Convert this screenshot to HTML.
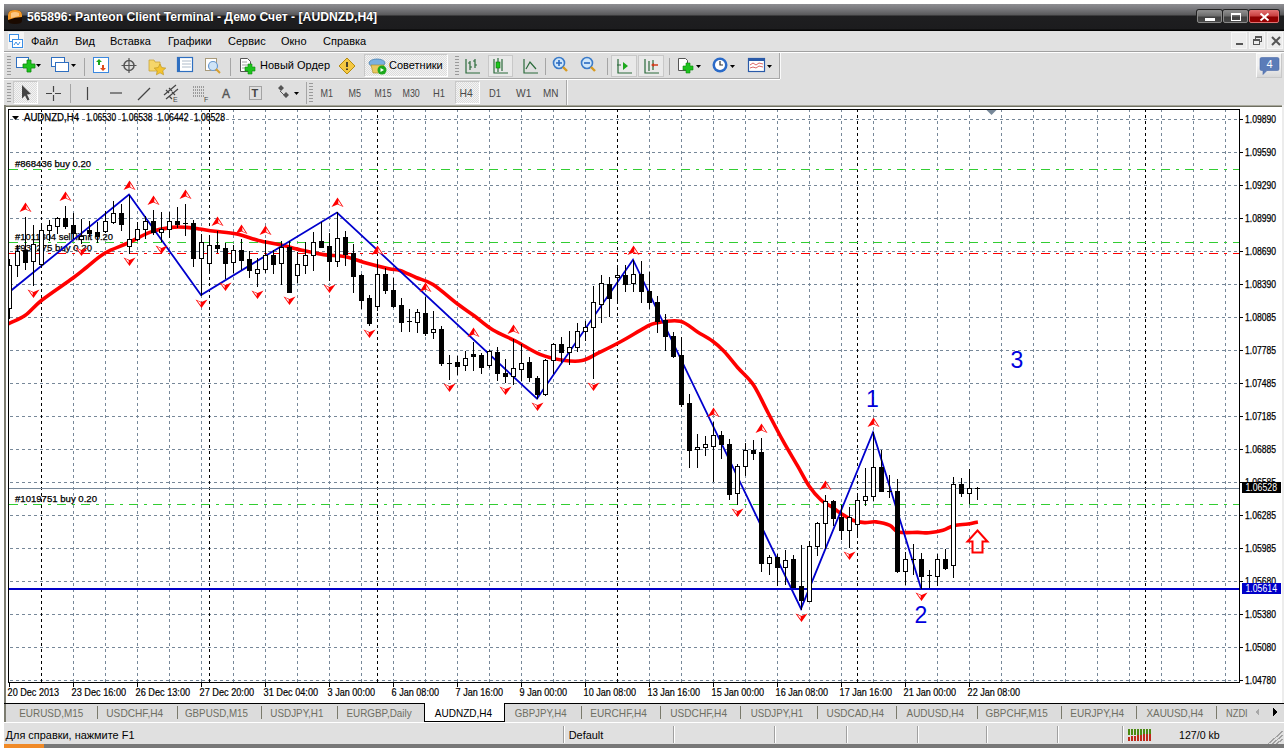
<!DOCTYPE html>
<html><head><meta charset="utf-8">
<style>
*{margin:0;padding:0;box-sizing:border-box}
html,body{width:1288px;height:748px;overflow:hidden;background:#fff;font-family:"Liberation Sans",sans-serif;font-size:11px;color:#000;position:relative}
.a{position:absolute}
#title{left:4px;top:4px;width:1280px;height:27px;background:linear-gradient(#8e8e92 0px,#78787c 5px,#58585a 11px,#1e1e20 12px,#1c1c1e 25px,#020202 26px)}
.tt{left:27px;top:6px;color:#fff;font-weight:bold;font-size:12.5px;white-space:nowrap}
.wb{top:6px;height:13px;border-radius:2px;border:1px solid #8a8a8a;box-shadow:0 0 0 1px #202020}
#menubar{left:4px;top:31px;width:1280px;height:20px;background:#e1e1e1}
.mi{top:4px;font-size:11px;white-space:nowrap}
.sepl{left:4px;width:1280px;height:1px}
#tb1{left:4px;top:52px;width:1280px;height:26px;background:#dfdfdf}
#tb2{left:4px;top:79px;width:1280px;height:26px;background:#dfdfdf}
.vs{width:1px;background:#a5a5a5}
.tf{color:#505050;font-size:11px;white-space:nowrap}
.grip{width:4px;background:repeating-linear-gradient(#9a9a9a 0 1px,transparent 1px 3px)}
.press{background:repeating-conic-gradient(#f4f4f4 0 25%,#dcdcdc 0 50%) 0 0/2px 2px;border:1px solid #c8c8c8;border-right-color:#fff;border-bottom-color:#fff}
#tabs{left:4px;top:705px;width:1280px;height:18px;background:#dddddd}
.tab{top:706px;color:#6e6e60;font-size:11px;white-space:nowrap}
.tsep{top:708px;width:1px;height:12px;background:#7a7a70}
#status{left:4px;top:724px;width:1280px;height:20px;background:#e1e1e1}
.ssep{top:725px;width:1px;height:18px;background:#b0b0b0}
</style></head><body>
<!-- title -->
<div id="title" class="a">
  <svg class="a" style="left:3px;top:5px" width="16" height="16"><path d="M1 6 Q1 1 8 1 Q15 1 15 6 L15 12 Q15 15 8 15 Q1 15 1 12Z" fill="#1a0a00"/><path d="M1 6 Q1 1 8 1 Q15 1 15 6 L15 8 Q8 8 1 11Z" fill="#f39a2a"/><path d="M4 4 Q8 2 12 4 L12 7 Q8 8 4 9Z" fill="#ffd9a8" opacity=".7"/></svg>
  <svg class="a" style="left:0;top:0" width="420" height="27"><text x="23" y="16.8" font-family="Liberation Sans" font-weight="bold" font-size="12.5" textLength="350" lengthAdjust="spacingAndGlyphs" fill="#fff" stroke="#000" stroke-width="0.3" paint-order="stroke">565896: Panteon Client Terminal - Демо Счет - [AUDNZD,H4]</text></svg>
  <div class="a wb" style="left:1193px;width:25px;background:linear-gradient(#8c8c8c,#6c6c6c 45%,#404040 55%,#484848)"><div class="a" style="left:7px;top:7px;width:10px;height:3px;background:#fff"></div></div>
  <div class="a wb" style="left:1219px;width:25px;background:linear-gradient(#8c8c8c,#6c6c6c 45%,#404040 55%,#484848)"><div class="a" style="left:7px;top:2px;width:10px;height:8px;border:1px solid #fff;border-top-width:2px"></div></div>
  <div class="a wb" style="left:1245px;width:30px;border-color:#e07070;background:linear-gradient(#e06a6a,#c84040 45%,#8c0000 55%,#960000)"><svg class="a" style="left:9px;top:1px" width="11" height="10"><path d="M1.5 1.5L9.5 8.5M9.5 1.5L1.5 8.5" stroke="#fff" stroke-width="2"/></svg></div>
</div>
<!-- menu -->
<div id="menubar" class="a">
  <div class="a" style="left:4px;top:1px;width:16px;height:17px;background:#f4f4f4"></div>
  <svg class="a" style="left:4px;top:2px" width="16" height="16"><rect x="1.5" y="1.5" width="9" height="7" fill="#fff" stroke="#3a8ee6"/><rect x="4.5" y="6.5" width="10" height="8" fill="#fff" stroke="#3a8ee6"/><path d="M6 12l2-3 2 3 2-3" stroke="#3a8ee6" fill="none"/></svg>
  <div class="a mi" style="left:27px">Файл</div>
  <div class="a mi" style="left:71px">Вид</div>
  <div class="a mi" style="left:106px">Вставка</div>
  <div class="a mi" style="left:164px">Графики</div>
  <div class="a mi" style="left:224px">Сервис</div>
  <div class="a mi" style="left:277px">Окно</div>
  <div class="a mi" style="left:319px">Справка</div>
  <div class="a" style="left:1227px;top:1px;width:16px;height:17px;background:#ececec;border:1px solid #f6f6f6"><div class="a" style="left:4px;top:10px;width:7px;height:2px;background:#555"></div></div>
  <div class="a" style="left:1245px;top:1px;width:16px;height:17px;background:#ececec;border:1px solid #f6f6f6"><div class="a" style="left:5px;top:3px;width:7px;height:6px;border:1px solid #555;border-top-width:2px"></div><div class="a" style="left:3px;top:6px;width:7px;height:6px;border:1px solid #555;border-top-width:2px;background:#ececec"></div></div>
  <div class="a" style="left:1263px;top:1px;width:16px;height:17px;background:#ececec;border:1px solid #f6f6f6"><svg class="a" style="left:3px;top:3px" width="10" height="10"><path d="M1 1L9 9M9 1L1 9" stroke="#555" stroke-width="2"/></svg></div>
</div>
<div class="a sepl" style="top:51px;background:#a0a0a0"></div>
<div class="a sepl" style="top:52px;background:#fff"></div>
<!-- toolbar 1 -->
<div id="tb1" class="a" style="top:53px;height:27px">
  <div class="a grip" style="left:3px;top:3px;height:19px"></div>
  <svg class="a" style="left:8px;top:3px" width="780" height="20">
    <!-- new chart -->
    <rect x="4.5" y="1.5" width="12" height="10" fill="#fff" stroke="#2f6fc0"/><path d="M11 8h4V4h4v4h4v4h-4v4h-4v-4h-4z" fill="#1ec31e" stroke="#0a8a0a" stroke-width=".8"/>
    <path d="M24 8h5l-2.5 3z" fill="#000"/>
    <!-- profiles -->
    <rect x="39.5" y="1.5" width="13" height="9" fill="#fff" stroke="#2f6fc0"/><rect x="43.5" y="6.5" width="13" height="9" fill="#fff" stroke="#2f6fc0"/><path d="M59 8h5l-2.5 3z" fill="#000"/>
    <rect x="72" y="2" width="1" height="19" fill="#a5a5a5"/>
    <!-- market watch -->
    <rect x="81.5" y="1.5" width="15" height="15" fill="#fff" stroke="#3a88e0"/><path d="M84 6l3-3 3 3h-2v3h-2V6z" fill="#1ca81c"/><path d="M88 12l3 3 3-3h-2V9h-2v3z" fill="#e04a1a"/>
    <!-- crosshair -->
    <circle cx="117" cy="9.5" r="5" fill="none" stroke="#555" stroke-width="1.5"/><path d="M117 2v15M109.5 9.5h15" stroke="#555" stroke-width="1.2"/>
    <!-- folder star -->
    <path d="M137 4h5l1 2h5v9h-11z" fill="#f5d66a" stroke="#c9a53a" stroke-width=".8"/><path d="M148 8l1.8 3.6 4 .5-3 2.7.8 4-3.6-2-3.6 2 .8-4-3-2.7 4-.5z" fill="#f4c430" stroke="#b8901a" stroke-width=".6"/>
    <!-- terminal -->
    <rect x="165.5" y="1.5" width="15" height="14" fill="#fff" stroke="#2f6fc0" stroke-width="1.2"/><rect x="166" y="2" width="2" height="13" fill="#2f6fc0"/><path d="M170 5h9M170 8h9M170 11h9" stroke="#9ab" stroke-width=".8"/>
    <!-- tester -->
    <rect x="193.5" y="2.5" width="11" height="12" fill="#fff" stroke="#a89a7a"/><circle cx="201" cy="10" r="4.5" fill="#cfe4f7" stroke="#6a9ad0" stroke-width="1.2"/><path d="M204 13l4 4" stroke="#d8a030" stroke-width="2"/>
    <rect x="218" y="2" width="1" height="19" fill="#a5a5a5"/>
    <!-- new order -->
    <path d="M228.5 2.5h7l3 3v10h-10z" fill="#fff" stroke="#555"/><path d="M230 6h5M230 9h6M230 12h4" stroke="#888" stroke-width=".8"/><path d="M233 11h3V8h4v3h3v4h-3v3h-4v-3h-3z" fill="#1ec31e" stroke="#0a8a0a" stroke-width=".6"/>
    <!-- warning -->
    <path d="M335 2l8 8-8 8-8-8z" fill="#f5c842" stroke="#b58c10"/><path d="M335 6v5M335 12.5v1.5" stroke="#222" stroke-width="1.6"/>
  </svg>
  <div class="a tf" style="left:256px;top:6px;color:#000">Новый Ордер</div>
  <div class="a press" style="left:360px;top:1px;width:84px;height:23px"></div>
  <svg class="a" style="left:364px;top:3px" width="20" height="20"><ellipse cx="9" cy="7" rx="8" ry="4" fill="#7ab0e0" stroke="#4a80b0" stroke-width=".8"/><path d="M3 9h13l-2 8H5z" fill="#e8c860" stroke="#a88a20" stroke-width=".6"/><circle cx="14" cy="14" r="4.5" fill="#1ca81c"/><path d="M12.5 12l3.5 2-3.5 2z" fill="#fff"/></svg>
  <div class="a tf" style="left:385px;top:6px;color:#000">Советники</div>
  <div class="a grip" style="left:451px;top:3px;height:19px"></div>
  <svg class="a" style="left:456px;top:2px" width="330" height="22">
    <!-- bar chart -->
    <path d="M6 4v14h14M10 6v9M8 8h2M10 12h2M15 4v9M13 6h2M15 10h2" stroke="#2a6a3a" fill="none" stroke-width="1.2"/>
    <rect x="28.5" y="0.5" width="24" height="21" fill="#e9e9e9" stroke="#c8c8c8"/>
    <path d="M34 4v14h14M38 3v14M42 4v12" stroke="#2a6a3a" fill="none" stroke-width="1.2"/><rect x="36" y="7" width="4" height="6" fill="#1cc81c" stroke="#0a6a0a" stroke-width=".6"/>
    <path d="M64 4v14h14M66 14l4-7 6 7" stroke="#2a6a3a" fill="none" stroke-width="1.2"/>
    <rect x="85" y="3" width="1" height="17" fill="#a5a5a5"/>
    <!-- zoom in/out -->
    <circle cx="99" cy="8" r="5.5" fill="#cfe6fa" stroke="#3a7ac8" stroke-width="1.6"/><path d="M96 8h6M99 5v6" stroke="#2a6ac0" stroke-width="1.6"/><path d="M103 12l4 4" stroke="#d89a20" stroke-width="2.4"/>
    <circle cx="127" cy="8" r="5.5" fill="#cfe6fa" stroke="#3a7ac8" stroke-width="1.6"/><path d="M124 8h6" stroke="#2a6ac0" stroke-width="1.6"/><path d="M131 12l4 4" stroke="#d89a20" stroke-width="2.4"/>
    <rect x="147" y="3" width="1" height="17" fill="#a5a5a5"/>
    <rect x="151.5" y="0.5" width="25" height="21" fill="#e9e9e9" stroke="#c8c8c8"/>
    <path d="M158 4v14h14M157 10h4" stroke="#2a6a3a" fill="none" stroke-width="1.2"/><path d="M163 7l5 4-5 4z" fill="#1ca81c"/>
    <rect x="178.5" y="0.5" width="25" height="21" fill="#e9e9e9" stroke="#c8c8c8"/>
    <path d="M185 4v14h14M189 6v10M193 5v10" stroke="#2a6a3a" fill="none" stroke-width="1.2"/><path d="M198 10h-4" stroke="#d03a1a" stroke-width="1.5"/><path d="M194 8l-3 2 3 2z" fill="#d03a1a"/>
    <rect x="209" y="3" width="1" height="17" fill="#a5a5a5"/>
    <!-- add indicator -->
    <path d="M218.5 3.5h7l2 2v10h-9z" fill="#fff" stroke="#555"/><path d="M223 11h3V8h4v3h3v4h-3v3h-4v-3h-3z" fill="#1ec31e" stroke="#0a8a0a" stroke-width=".6"/><path d="M236 10h5l-2.5 3z" fill="#000"/>
    <!-- clock -->
    <circle cx="260" cy="10" r="7.5" fill="#2a6ac8"/><circle cx="260" cy="10" r="5" fill="#fff"/><path d="M260 6v4h3" stroke="#333" stroke-width="1.2" fill="none"/><path d="M270 10h5l-2.5 3z" fill="#000"/>
    <!-- templates -->
    <rect x="288.5" y="3.5" width="16" height="13" fill="#fff" stroke="#2a5aa8" stroke-width="1.2"/><rect x="289" y="4" width="15" height="2" fill="#2a5aa8"/><path d="M290 10l3-2 3 2 3-2 4 1M290 13l3-1 3 1 3-2 4 1" stroke="#d04040" stroke-width=".8" fill="none"/><path d="M307 10h5l-2.5 3z" fill="#000"/>
  </svg>
  <div class="a" style="left:1252px;top:0px;width:26px;height:25px;background:linear-gradient(#f2f2f2 50%,#d8d8d8);border:1px solid #fafafa;border-right-color:#c8c8c8;border-bottom-color:#c8c8c8"></div>
  <svg class="a" style="left:1255px;top:3px" width="22" height="20"><path d="M2.5 1.5h16a1.5 1.5 0 0 1 1.5 1.5v10a1.5 1.5 0 0 1-1.5 1.5H8l-4 4v-4H2.5A1.5 1.5 0 0 1 1 13V3a1.5 1.5 0 0 1 1.5-1.5z" fill="#5b7cb8" stroke="#4a6aa8" stroke-width=".6"/><text x="10.5" y="12" font-family="'Liberation Sans', sans-serif" font-size="11" fill="#fff" text-anchor="middle">4</text></svg>
</div>
<div class="a" style="left:4px;top:78px;width:775px;height:1px;background:#a8a8a8"></div>
<div class="a" style="left:4px;top:79px;width:776px;height:1px;background:#fff"></div>
<div class="a" style="left:779px;top:53px;width:1px;height:26px;background:#a8a8a8"></div>
<div class="a" style="left:780px;top:53px;width:1px;height:26px;background:#fafafa"></div>
<!-- toolbar 2 -->
<div id="tb2" class="a" style="top:80px;height:25px">
  <div class="a grip" style="left:3px;top:3px;height:19px"></div>
  <div class="a press" style="left:9px;top:1px;width:25px;height:23px"></div>
  <svg class="a" style="left:6px;top:2px" width="300" height="22">
    <path d="M12 3l9 9-4 .5 2.5 5-2 1-2.5-5-3 3z" fill="#444"/>
    <path d="M43.5 4v6M43.5 13v6M36 11.5h6M45 11.5h6" stroke="#444" stroke-width="1.2"/>
    <rect x="60" y="2" width="1" height="19" fill="#a5a5a5"/>
    <path d="M77.5 5v13" stroke="#444" stroke-width="1.2"/>
    <path d="M100 11h12" stroke="#444" stroke-width="1.2"/>
    <path d="M128 18l12-12" stroke="#444" stroke-width="1.2"/>
    <path d="M154 13l12-10M156 17l12-10M156 8l3 3M159 6l3 3M162 10l3 3M159 14l3 3" stroke="#444" stroke-width="1.2"/><text x="163" y="20" font-family="Liberation Sans" font-size="7" fill="#444">E</text>
    <path d="M183 5h11M183 8h11M183 11h11M183 14h11" stroke="#555" stroke-width="1" stroke-dasharray="1 1"/><text x="194" y="20" font-family="Liberation Sans" font-size="7" fill="#444">F</text>
    <text x="212" y="15.5" font-family="Liberation Sans" font-size="12" fill="#555" stroke="#555" stroke-width="0.4">A</text>
    <rect x="239.5" y="4.5" width="12" height="13" fill="none" stroke="#666" stroke-dasharray="1 1"/><text x="241.5" y="15" font-family="Liberation Sans" font-weight="bold" font-size="11" fill="#444">T</text>
    <path d="M268 6l3-3 3 3-3 3zM273 13l3-3 3 3-3 3z" fill="#555"/><path d="M270 9l5 5" stroke="#555"/><path d="M284 10h5l-2.5 3z" fill="#000"/>
  </svg>
  <div class="a vs" style="left:302px;top:2px;height:22px"></div>
  <div class="a grip" style="left:305px;top:3px;height:19px"></div>
  <div class="a press" style="left:451px;top:1px;width:25px;height:23px"></div>
  <svg class="a" style="left:-4px;top:-80px" width="600" height="110"><text x="320.5" y="97" font-family="Liberation Sans" font-size="10.4" textLength="12.5" lengthAdjust="spacingAndGlyphs" fill="#4a4a4a">M1</text><text x="348.5" y="97" font-family="Liberation Sans" font-size="10.4" textLength="12.5" lengthAdjust="spacingAndGlyphs" fill="#4a4a4a">M5</text><text x="374.6" y="97" font-family="Liberation Sans" font-size="10.4" textLength="17" lengthAdjust="spacingAndGlyphs" fill="#4a4a4a">M15</text><text x="402.5" y="97" font-family="Liberation Sans" font-size="10.4" textLength="17.3" lengthAdjust="spacingAndGlyphs" fill="#4a4a4a">M30</text><text x="433" y="97" font-family="Liberation Sans" font-size="10.4" textLength="12" lengthAdjust="spacingAndGlyphs" fill="#4a4a4a">H1</text><text x="459.5" y="97" font-family="Liberation Sans" font-size="10.4" textLength="13.3" lengthAdjust="spacingAndGlyphs" fill="#4a4a4a">H4</text><text x="489" y="97" font-family="Liberation Sans" font-size="10.4" textLength="12" lengthAdjust="spacingAndGlyphs" fill="#4a4a4a">D1</text><text x="516" y="97" font-family="Liberation Sans" font-size="10.4" textLength="15.4" lengthAdjust="spacingAndGlyphs" fill="#4a4a4a">W1</text><text x="543" y="97" font-family="Liberation Sans" font-size="10.4" textLength="15.5" lengthAdjust="spacingAndGlyphs" fill="#4a4a4a">MN</text></svg>
  <div class="a" style="left:562px;top:0px;width:1px;height:25px;background:#a8a8a8"></div><div class="a" style="left:563px;top:0px;width:1px;height:25px;background:#fafafa"></div>
</div>
<!-- MDI frame -->
<div class="a" style="left:4px;top:105px;width:1280px;height:1px;background:#a8a89c"></div><div class="a" style="left:4px;top:106px;width:1280px;height:1px;background:#6e6e60"></div>
<div class="a" style="left:4px;top:105px;width:2px;height:598px;background:#7c7c70"></div>
<div class="a" style="left:1282px;top:105px;width:2px;height:598px;background:#ececec"></div>
<div class="a" style="left:4px;top:703px;width:1280px;height:1px;background:#000"></div>
<svg class="a" style="left:0;top:0" width="1288" height="748"><defs><clipPath id="cc"><rect x="9" y="110" width="1230" height="573"/></clipPath></defs><path d="M10 119.5H1239 M10 152.5H1239 M10 185.5H1239 M10 218.5H1239 M10 251.5H1239 M10 284.5H1239 M10 317.5H1239 M10 350.5H1239 M10 383.5H1239 M10 416.5H1239 M10 449.5H1239 M10 482.5H1239 M10 515.5H1239 M10 548.5H1239 M10 581.5H1239 M10 614.5H1239 M10 647.5H1239 M10 680.5H1239" stroke="#778899" stroke-width="1" stroke-dasharray="3 3" fill="none"/><path d="M41.5 110V683 M73.5 110V683 M105.5 110V683 M137.5 110V683 M169.5 110V683 M201.5 110V683 M233.5 110V683 M265.5 110V683 M297.5 110V683 M329.5 110V683 M361.5 110V683 M393.5 110V683 M425.5 110V683 M457.5 110V683 M489.5 110V683 M521.5 110V683 M553.5 110V683 M585.5 110V683 M617.5 110V683 M649.5 110V683 M681.5 110V683 M713.5 110V683 M745.5 110V683 M777.5 110V683 M809.5 110V683 M841.5 110V683 M873.5 110V683 M905.5 110V683 M937.5 110V683 M969.5 110V683 M1001.5 110V683 M1033.5 110V683 M1065.5 110V683 M1097.5 110V683 M1129.5 110V683 M1161.5 110V683 M1193.5 110V683 M1225.5 110V683" stroke="#778899" stroke-width="1" stroke-dasharray="3 3" stroke-dashoffset="1" fill="none"/><path d="M41.5 110V683 M209.5 110V683 M377.5 110V683 M617.5 110V683 M857.5 110V683 M1145.5 110V683" stroke="#000" stroke-width="1" stroke-dasharray="3 3" stroke-dashoffset="1" fill="none"/><path d="M9 169.5H1239" stroke="#32cd32" stroke-width="1" stroke-dasharray="9 6 3 6" fill="none"/><path d="M9 242.5H1239" stroke="#32cd32" stroke-width="1" stroke-dasharray="9 6 3 6" fill="none"/><path d="M9 253.5H1239" stroke="#ff0000" stroke-width="1" stroke-dasharray="9 6 3 6" fill="none"/><path d="M9 504.5H1239" stroke="#32cd32" stroke-width="1" stroke-dasharray="9 6 3 6" fill="none"/><text x="24" y="121" font-family='"Liberation Sans", sans-serif' font-size="10" textLength="55" lengthAdjust="spacingAndGlyphs" fill="#000" stroke="#000" stroke-width="0.25" >AUDNZD,H4</text><text x="86" y="121" font-family='"Liberation Sans", sans-serif' font-size="10" textLength="30" lengthAdjust="spacingAndGlyphs" fill="#000" stroke="#000" stroke-width="0.25" >1.06530</text><text x="121.5" y="121" font-family='"Liberation Sans", sans-serif' font-size="10" textLength="31" lengthAdjust="spacingAndGlyphs" fill="#000" stroke="#000" stroke-width="0.25" >1.06538</text><text x="157" y="121" font-family='"Liberation Sans", sans-serif' font-size="10" textLength="31.5" lengthAdjust="spacingAndGlyphs" fill="#000" stroke="#000" stroke-width="0.25" >1.06442</text><text x="193.7" y="121" font-family='"Liberation Sans", sans-serif' font-size="10" textLength="31.3" lengthAdjust="spacingAndGlyphs" fill="#000" stroke="#000" stroke-width="0.25" >1.06528</text><text x="15" y="167" font-family='"Liberation Sans", sans-serif' font-size="9.4" textLength="76" lengthAdjust="spacingAndGlyphs" fill="#000" stroke="#000" stroke-width="0.25" >#868436 buy 0.20</text><text x="15" y="240" font-family='"Liberation Sans", sans-serif' font-size="9.4" textLength="98" lengthAdjust="spacingAndGlyphs" fill="#000" stroke="#000" stroke-width="0.25" >#1011304 sell limit 0.20</text><text x="15" y="251" font-family='"Liberation Sans", sans-serif' font-size="9.4" textLength="77" lengthAdjust="spacingAndGlyphs" fill="#000" stroke="#000" stroke-width="0.25" >#930275 buy 0.20</text><text x="15" y="502" font-family='"Liberation Sans", sans-serif' font-size="9.4" textLength="82" lengthAdjust="spacingAndGlyphs" fill="#000" stroke="#000" stroke-width="0.25" >#1019751 buy 0.20</text><path d="M9 488.5H1239" stroke="#778899" stroke-width="1" fill="none"/><rect x="9" y="588" width="1230" height="2" fill="#0000c8"/><path clip-path="url(#cc)" d="M-8,333 C-5.3,331.5 2.5,326.9 8,324 C13.5,321.1 19.3,319.5 25,315.5 C30.7,311.5 34.0,306.2 42,300 C50.0,293.8 65.5,283.5 73,278 C80.5,272.5 81.7,271.2 87,267 C92.3,262.8 98.2,257.0 105,253 C111.8,249.0 120.5,246.4 128,243 C135.4,239.6 142.4,235.0 149.7,232.4 C156.9,229.8 165.3,228.2 171.5,227.4 C177.7,226.6 182.0,227.1 186.7,227.4 C191.4,227.7 195.0,228.3 199.7,229 C204.4,229.7 208.8,230.5 215,231.3 C221.2,232.1 229.5,232.5 236.7,234 C243.9,235.5 251.2,238.6 258.4,240.4 C265.6,242.2 272.7,243.2 280,244.8 C287.3,246.4 294.7,248.6 302,250.2 C309.3,251.8 316.5,253.5 323.7,254.6 C330.9,255.7 338.2,255.2 345.4,256.7 C352.6,258.1 359.8,261.3 367,263.3 C374.2,265.3 383.4,267.5 388.9,268.7 C394.4,269.9 395.5,269.0 400,270.5 C404.5,272.0 410.5,275.2 416,277.5 C421.5,279.8 426.0,280.0 433,284.5 C440.0,289.0 451.1,299.1 458,304.3 C464.9,309.6 468.7,311.7 474.5,316 C480.3,320.3 486.0,325.8 493,330 C500.0,334.2 508.7,337.4 516.5,341.5 C524.3,345.6 532.2,351.2 540,354.3 C547.8,357.4 556.0,359.1 563,360.2 C570.0,361.2 576.2,361.8 582,360.6 C587.8,359.4 591.5,356.4 598,353.2 C604.5,350.0 613.2,345.8 621,341.5 C628.8,337.2 639.2,330.7 645,327.6 C650.8,324.5 650.2,324.0 656,322.9 C661.8,321.8 673.1,319.7 680,321.2 C686.9,322.7 692.2,328.7 697.6,332 C703.0,335.3 708.0,337.8 712.4,341 C716.8,344.2 719.6,346.6 724,351.2 C728.4,355.8 733.9,363.2 738.8,368.8 C743.7,374.4 748.6,377.6 753.5,385 C758.4,392.4 763.3,403.7 768.2,413 C773.1,422.3 778.1,432.1 783,440.9 C787.9,449.7 793.2,458.3 797.6,465.9 C802.0,473.5 805.5,480.8 809.4,486.5 C813.3,492.2 817.4,496.6 821,500 C824.6,503.4 827.9,504.4 831.2,506.6 C834.5,508.9 837.3,511.2 841,513.5 C844.7,515.8 849.5,519.0 853.5,520.5 C857.5,522.0 861.0,522.4 864.7,522.6 C868.4,522.8 871.7,521.4 875.9,521.9 C880.1,522.4 886.2,523.7 889.9,525.4 C893.6,527.1 893.6,530.8 898.3,532 C902.9,533.2 912.7,532.3 917.8,532.4 C922.9,532.5 924.8,533.1 929,532.8 C933.2,532.4 938.8,531.5 943,530.3 C947.2,529.1 950.0,526.4 954.2,525.4 C958.4,524.4 964.0,524.6 968,524 C972.0,523.4 976.2,522.2 977.9,521.9" stroke="#ff0000" stroke-width="3.6" fill="none" stroke-linejoin="round"/><polyline clip-path="url(#cc)" points="0,299.6 129,194.6 201,295 337,212.5 537,398.7 633,259.7 801,608.7 873,432.4 921,588.2" stroke="#0000cd" stroke-width="1.8" fill="none" stroke-linejoin="miter"/><path d="M25.5 202.5 L19.5 212 L25.5 209.5 L31.5 212 Z" fill="#ff0000"/><path d="M26.3 205.3 L29.9 211.1 L26.3 208.9 Z" fill="#fff"/><path d="M65.5 191.5 L59.5 201 L65.5 198.5 L71.5 201 Z" fill="#ff0000"/><path d="M66.3 194.3 L69.9 200.1 L66.3 197.9 Z" fill="#fff"/><path d="M129.5 180.5 L123.5 190 L129.5 187.5 L135.5 190 Z" fill="#ff0000"/><path d="M130.3 183.3 L133.9 189.1 L130.3 186.9 Z" fill="#fff"/><path d="M153.5 195.5 L147.5 205 L153.5 202.5 L159.5 205 Z" fill="#ff0000"/><path d="M154.3 198.3 L157.9 204.1 L154.3 201.9 Z" fill="#fff"/><path d="M185.5 189.5 L179.5 199 L185.5 196.5 L191.5 199 Z" fill="#ff0000"/><path d="M186.3 192.3 L189.9 198.1 L186.3 195.9 Z" fill="#fff"/><path d="M217.5 216.5 L211.5 226 L217.5 223.5 L223.5 226 Z" fill="#ff0000"/><path d="M218.3 219.3 L221.9 225.1 L218.3 222.9 Z" fill="#fff"/><path d="M241.5 224.5 L235.5 234 L241.5 231.5 L247.5 234 Z" fill="#ff0000"/><path d="M242.3 227.3 L245.9 233.1 L242.3 230.9 Z" fill="#fff"/><path d="M265.5 225.5 L259.5 235 L265.5 232.5 L271.5 235 Z" fill="#ff0000"/><path d="M266.3 228.3 L269.9 234.1 L266.3 231.9 Z" fill="#fff"/><path d="M337.5 197.5 L331.5 207 L337.5 204.5 L343.5 207 Z" fill="#ff0000"/><path d="M338.3 200.3 L341.9 206.1 L338.3 203.9 Z" fill="#fff"/><path d="M377.5 245.5 L371.5 255 L377.5 252.5 L383.5 255 Z" fill="#ff0000"/><path d="M378.3 248.3 L381.9 254.1 L378.3 251.9 Z" fill="#fff"/><path d="M425.5 282.5 L419.5 292 L425.5 289.5 L431.5 292 Z" fill="#ff0000"/><path d="M426.3 285.3 L429.9 291.1 L426.3 288.9 Z" fill="#fff"/><path d="M473.5 327.5 L467.5 337 L473.5 334.5 L479.5 337 Z" fill="#ff0000"/><path d="M474.3 330.3 L477.9 336.1 L474.3 333.9 Z" fill="#fff"/><path d="M513.5 324.5 L507.5 334 L513.5 331.5 L519.5 334 Z" fill="#ff0000"/><path d="M514.3 327.3 L517.9 333.1 L514.3 330.9 Z" fill="#fff"/><path d="M633.5 245.5 L627.5 255 L633.5 252.5 L639.5 255 Z" fill="#ff0000"/><path d="M634.3 248.3 L637.9 254.1 L634.3 251.9 Z" fill="#fff"/><path d="M713.5 407.5 L707.5 417 L713.5 414.5 L719.5 417 Z" fill="#ff0000"/><path d="M714.3 410.3 L717.9 416.1 L714.3 413.9 Z" fill="#fff"/><path d="M761.5 423.5 L755.5 433 L761.5 430.5 L767.5 433 Z" fill="#ff0000"/><path d="M762.3 426.3 L765.9 432.1 L762.3 429.9 Z" fill="#fff"/><path d="M825.5 480.5 L819.5 490 L825.5 487.5 L831.5 490 Z" fill="#ff0000"/><path d="M826.3 483.3 L829.9 489.1 L826.3 486.9 Z" fill="#fff"/><path d="M873.5 417.5 L867.5 427 L873.5 424.5 L879.5 427 Z" fill="#ff0000"/><path d="M874.3 420.3 L877.9 426.1 L874.3 423.9 Z" fill="#fff"/><path d="M33.5 298 L27.5 289.5 L33.5 292 L39.5 289.5 Z" fill="#ff0000"/><path d="M32.7 295.2 L29.1 290.4 L32.7 292.6 Z" fill="#fff"/><path d="M81.5 256 L75.5 247.5 L81.5 250 L87.5 247.5 Z" fill="#ff0000"/><path d="M80.7 253.2 L77.1 248.4 L80.7 250.6 Z" fill="#fff"/><path d="M129.5 266 L123.5 257.5 L129.5 260 L135.5 257.5 Z" fill="#ff0000"/><path d="M128.7 263.2 L125.1 258.4 L128.7 260.6 Z" fill="#fff"/><path d="M161.5 254 L155.5 245.5 L161.5 248 L167.5 245.5 Z" fill="#ff0000"/><path d="M160.7 251.2 L157.1 246.4 L160.7 248.6 Z" fill="#fff"/><path d="M201.5 308 L195.5 299.5 L201.5 302 L207.5 299.5 Z" fill="#ff0000"/><path d="M200.7 305.2 L197.1 300.4 L200.7 302.6 Z" fill="#fff"/><path d="M225.5 291 L219.5 282.5 L225.5 285 L231.5 282.5 Z" fill="#ff0000"/><path d="M224.7 288.2 L221.1 283.4 L224.7 285.6 Z" fill="#fff"/><path d="M257.5 299 L251.5 290.5 L257.5 293 L263.5 290.5 Z" fill="#ff0000"/><path d="M256.7 296.2 L253.1 291.4 L256.7 293.6 Z" fill="#fff"/><path d="M289.5 305 L283.5 296.5 L289.5 299 L295.5 296.5 Z" fill="#ff0000"/><path d="M288.7 302.2 L285.1 297.4 L288.7 299.6 Z" fill="#fff"/><path d="M329.5 293 L323.5 284.5 L329.5 287 L335.5 284.5 Z" fill="#ff0000"/><path d="M328.7 290.2 L325.1 285.4 L328.7 287.6 Z" fill="#fff"/><path d="M369.5 338 L363.5 329.5 L369.5 332 L375.5 329.5 Z" fill="#ff0000"/><path d="M368.7 335.2 L365.1 330.4 L368.7 332.6 Z" fill="#fff"/><path d="M449.5 392 L443.5 383.5 L449.5 386 L455.5 383.5 Z" fill="#ff0000"/><path d="M448.7 389.2 L445.1 384.4 L448.7 386.6 Z" fill="#fff"/><path d="M505.5 395 L499.5 386.5 L505.5 389 L511.5 386.5 Z" fill="#ff0000"/><path d="M504.7 392.2 L501.1 387.4 L504.7 389.6 Z" fill="#fff"/><path d="M537.5 411 L531.5 402.5 L537.5 405 L543.5 402.5 Z" fill="#ff0000"/><path d="M536.7 408.2 L533.1 403.4 L536.7 405.6 Z" fill="#fff"/><path d="M593.5 391 L587.5 382.5 L593.5 385 L599.5 382.5 Z" fill="#ff0000"/><path d="M592.7 388.2 L589.1 383.4 L592.7 385.6 Z" fill="#fff"/><path d="M737.5 517 L731.5 508.5 L737.5 511 L743.5 508.5 Z" fill="#ff0000"/><path d="M736.7 514.2 L733.1 509.4 L736.7 511.6 Z" fill="#fff"/><path d="M801.5 622 L795.5 613.5 L801.5 616 L807.5 613.5 Z" fill="#ff0000"/><path d="M800.7 619.2 L797.1 614.4 L800.7 616.6 Z" fill="#fff"/><path d="M849.5 560 L843.5 551.5 L849.5 554 L855.5 551.5 Z" fill="#ff0000"/><path d="M848.7 557.2 L845.1 552.4 L848.7 554.6 Z" fill="#fff"/><path d="M921.5 601 L915.5 592.5 L921.5 595 L927.5 592.5 Z" fill="#ff0000"/><path d="M920.7 598.2 L917.1 593.4 L920.7 595.6 Z" fill="#fff"/><path d="M977.5 530.5 L987.5 541.5 L982.5 541.5 L982.5 552.5 L972.5 552.5 L972.5 541.5 L967.5 541.5 Z" fill="none" stroke="#ff0000" stroke-width="2"/><text x="872.5" y="407" font-family='"Liberation Sans", sans-serif' font-size="23" fill="#0000dd" text-anchor="middle">1</text><text x="921" y="623" font-family='"Liberation Sans", sans-serif' font-size="23" fill="#0000dd" text-anchor="middle">2</text><text x="1017" y="368" font-family='"Liberation Sans", sans-serif' font-size="23" fill="#0000dd" text-anchor="middle">3</text><g shape-rendering="crispEdges" clip-path="url(#cc)"><path d="M9.5 259V265 M9.5 308V319 M17.5 245V251 M17.5 265V277 M25.5 217V270 M33.5 225V244 M33.5 261V286 M41.5 223V230 M41.5 264V267 M49.5 220V225 M49.5 230V241 M57.5 217V218 M57.5 226V234 M65.5 206V229 M73.5 213V239 M81.5 219V236 M81.5 239V244 M89.5 221V237 M97.5 222V243 M105.5 211V221 M105.5 231V233 M113.5 201V213 M113.5 222V224 M121.5 204V231 M129.5 195V239 M129.5 246V254 M137.5 222V229 M137.5 239V241 M145.5 216V221 M145.5 229V239 M153.5 210V235 M161.5 212V229 M161.5 232V242 M169.5 212V221 M169.5 229V238 M177.5 207V228 M185.5 204V236 M193.5 220V267 M201.5 234V242 M201.5 258V296 M209.5 235V245 M209.5 263V274 M217.5 231V253 M225.5 243V279 M233.5 245V250 M233.5 262V273 M241.5 239V270 M249.5 251V278 M257.5 258V269 M257.5 273V287 M265.5 240V255 M265.5 269V273 M273.5 250V274 M281.5 241V247 M281.5 263V285 M289.5 241V293 M297.5 252V264 M297.5 275V283 M305.5 242V255 M305.5 265V274 M313.5 232V242 M313.5 255V271 M321.5 222V248 M329.5 233V281 M337.5 212V238 M337.5 261V267 M345.5 231V266 M353.5 244V293 M361.5 274V309 M369.5 295V326 M377.5 260V274 M377.5 306V311 M385.5 268V294 M393.5 278V308 M401.5 298V332 M409.5 309V332 M417.5 309V312 M417.5 322V333 M425.5 297V336 M433.5 311V329 M433.5 332V339 M441.5 326V366 M449.5 355V380 M457.5 356V375 M465.5 351V358 M465.5 365V371 M473.5 342V371 M481.5 353V374 M489.5 350V351 M489.5 365V368 M497.5 347V381 M505.5 359V383 M513.5 339V368 M513.5 376V385 M521.5 344V363 M521.5 369V381 M529.5 357V382 M537.5 376V399 M545.5 359V360 M545.5 394V396 M553.5 343V344 M553.5 360V374 M561.5 337V363 M569.5 331V347 M569.5 352V365 M577.5 323V331 M577.5 347V352 M585.5 321V327 M585.5 331V341 M593.5 286V302 M593.5 327V379 M601.5 275V283 M601.5 304V323 M609.5 277V317 M617.5 265V275 M617.5 277V304 M625.5 265V292 M633.5 260V274 M633.5 283V292 M641.5 261V303 M649.5 272V309 M657.5 296V333 M665.5 314V351 M673.5 332V358 M681.5 337V407 M689.5 394V468 M697.5 434V447 M697.5 449V468 M705.5 436V444 M705.5 447V456 M713.5 422V435 M713.5 446V482 M721.5 431V459 M729.5 439V500 M737.5 464V466 M737.5 493V505 M745.5 443V450 M745.5 466V476 M753.5 440V460 M761.5 438V572 M769.5 555V557 M769.5 563V575 M777.5 554V586 M785.5 550V560 M785.5 567V585 M793.5 555V588 M801.5 545V610 M809.5 541V546 M817.5 522V523 M817.5 546V556 M825.5 495V501 M825.5 523V549 M833.5 500V526 M841.5 505V540 M849.5 507V517 M849.5 530V548 M857.5 493V500 M857.5 524V538 M865.5 468V496 M865.5 500V506 M873.5 432V467 M873.5 496V501 M881.5 450V492 M889.5 475V498 M897.5 479V573 M905.5 552V559 M905.5 571V585 M913.5 544V575 M921.5 553V589 M929.5 570V588 M937.5 554V559 M937.5 576V586 M945.5 549V570 M953.5 477V484 M953.5 565V578 M961.5 478V497 M969.5 469V488 M969.5 493V504 M977.5 487V500" stroke="#000" stroke-width="1" fill="none"/><rect x="23" y="250" width="5" height="13" fill="#000"/><rect x="63" y="218" width="5" height="9" fill="#000"/><rect x="71" y="225" width="5" height="9" fill="#000"/><rect x="87" y="230" width="5" height="4" fill="#000"/><rect x="95" y="232" width="5" height="5" fill="#000"/><rect x="119" y="213" width="5" height="12" fill="#000"/><rect x="151" y="221" width="5" height="12" fill="#000"/><rect x="175" y="221" width="5" height="4" fill="#000"/><rect x="183" y="223" width="5" height="1" fill="#000"/><rect x="191" y="223" width="5" height="36" fill="#000"/><rect x="215" y="245" width="5" height="4" fill="#000"/><rect x="223" y="248" width="5" height="16" fill="#000"/><rect x="239" y="250" width="5" height="11" fill="#000"/><rect x="247" y="259" width="5" height="12" fill="#000"/><rect x="271" y="255" width="5" height="10" fill="#000"/><rect x="287" y="247" width="5" height="46" fill="#000"/><rect x="319" y="241" width="5" height="7" fill="#000"/><rect x="327" y="246" width="5" height="16" fill="#000"/><rect x="343" y="237" width="5" height="18" fill="#000"/><rect x="351" y="253" width="5" height="24" fill="#000"/><rect x="359" y="275" width="5" height="26" fill="#000"/><rect x="367" y="298" width="5" height="26" fill="#000"/><rect x="383" y="274" width="5" height="17" fill="#000"/><rect x="391" y="290" width="5" height="17" fill="#000"/><rect x="399" y="305" width="5" height="18" fill="#000"/><rect x="407" y="321" width="5" height="1" fill="#000"/><rect x="423" y="313" width="5" height="21" fill="#000"/><rect x="439" y="329" width="5" height="35" fill="#000"/><rect x="447" y="363" width="5" height="1" fill="#000"/><rect x="455" y="362" width="5" height="5" fill="#000"/><rect x="471" y="354" width="5" height="3" fill="#000"/><rect x="479" y="355" width="5" height="13" fill="#000"/><rect x="495" y="352" width="5" height="22" fill="#000"/><rect x="503" y="373" width="5" height="4" fill="#000"/><rect x="527" y="362" width="5" height="16" fill="#000"/><rect x="535" y="378" width="5" height="17" fill="#000"/><rect x="559" y="344" width="5" height="9" fill="#000"/><rect x="607" y="284" width="5" height="15" fill="#000"/><rect x="623" y="275" width="5" height="10" fill="#000"/><rect x="639" y="274" width="5" height="18" fill="#000"/><rect x="647" y="291" width="5" height="12" fill="#000"/><rect x="655" y="302" width="5" height="20" fill="#000"/><rect x="663" y="320" width="5" height="17" fill="#000"/><rect x="671" y="336" width="5" height="21" fill="#000"/><rect x="679" y="355" width="5" height="50" fill="#000"/><rect x="687" y="403" width="5" height="48" fill="#000"/><rect x="719" y="435" width="5" height="10" fill="#000"/><rect x="727" y="444" width="5" height="51" fill="#000"/><rect x="751" y="450" width="5" height="4" fill="#000"/><rect x="759" y="452" width="5" height="112" fill="#000"/><rect x="775" y="557" width="5" height="11" fill="#000"/><rect x="791" y="559" width="5" height="29" fill="#000"/><rect x="799" y="586" width="5" height="15" fill="#000"/><rect x="831" y="501" width="5" height="18" fill="#000"/><rect x="839" y="517" width="5" height="14" fill="#000"/><rect x="879" y="467" width="5" height="25" fill="#000"/><rect x="887" y="491" width="5" height="1" fill="#000"/><rect x="895" y="491" width="5" height="81" fill="#000"/><rect x="911" y="559" width="5" height="1" fill="#000"/><rect x="919" y="559" width="5" height="18" fill="#000"/><rect x="927" y="575" width="5" height="1" fill="#000"/><rect x="943" y="559" width="5" height="10" fill="#000"/><rect x="959" y="484" width="5" height="10" fill="#000"/><rect x="975" y="488" width="5" height="1" fill="#000"/><rect x="7.5" y="265.5" width="4" height="43" fill="#fff" stroke="#000" stroke-width="1"/><rect x="15.5" y="251.5" width="4" height="14" fill="#fff" stroke="#000" stroke-width="1"/><rect x="31.5" y="244.5" width="4" height="17" fill="#fff" stroke="#000" stroke-width="1"/><rect x="39.5" y="230.5" width="4" height="34" fill="#fff" stroke="#000" stroke-width="1"/><rect x="47.5" y="225.5" width="4" height="5" fill="#fff" stroke="#000" stroke-width="1"/><rect x="55.5" y="218.5" width="4" height="8" fill="#fff" stroke="#000" stroke-width="1"/><rect x="79.5" y="236.5" width="4" height="3" fill="#fff" stroke="#000" stroke-width="1"/><rect x="103.5" y="221.5" width="4" height="10" fill="#fff" stroke="#000" stroke-width="1"/><rect x="111.5" y="213.5" width="4" height="9" fill="#fff" stroke="#000" stroke-width="1"/><rect x="127.5" y="239.5" width="4" height="7" fill="#fff" stroke="#000" stroke-width="1"/><rect x="135.5" y="229.5" width="4" height="10" fill="#fff" stroke="#000" stroke-width="1"/><rect x="143.5" y="221.5" width="4" height="8" fill="#fff" stroke="#000" stroke-width="1"/><rect x="159.5" y="229.5" width="4" height="3" fill="#fff" stroke="#000" stroke-width="1"/><rect x="167.5" y="221.5" width="4" height="8" fill="#fff" stroke="#000" stroke-width="1"/><rect x="199.5" y="242.5" width="4" height="16" fill="#fff" stroke="#000" stroke-width="1"/><rect x="207.5" y="245.5" width="4" height="18" fill="#fff" stroke="#000" stroke-width="1"/><rect x="231.5" y="250.5" width="4" height="12" fill="#fff" stroke="#000" stroke-width="1"/><rect x="255.5" y="269.5" width="4" height="4" fill="#fff" stroke="#000" stroke-width="1"/><rect x="263.5" y="255.5" width="4" height="14" fill="#fff" stroke="#000" stroke-width="1"/><rect x="279.5" y="247.5" width="4" height="16" fill="#fff" stroke="#000" stroke-width="1"/><rect x="295.5" y="264.5" width="4" height="11" fill="#fff" stroke="#000" stroke-width="1"/><rect x="303.5" y="255.5" width="4" height="10" fill="#fff" stroke="#000" stroke-width="1"/><rect x="311.5" y="242.5" width="4" height="13" fill="#fff" stroke="#000" stroke-width="1"/><rect x="335.5" y="238.5" width="4" height="23" fill="#fff" stroke="#000" stroke-width="1"/><rect x="375.5" y="274.5" width="4" height="32" fill="#fff" stroke="#000" stroke-width="1"/><rect x="415.5" y="312.5" width="4" height="10" fill="#fff" stroke="#000" stroke-width="1"/><rect x="431.5" y="329.5" width="4" height="3" fill="#fff" stroke="#000" stroke-width="1"/><rect x="463.5" y="358.5" width="4" height="7" fill="#fff" stroke="#000" stroke-width="1"/><rect x="487.5" y="351.5" width="4" height="14" fill="#fff" stroke="#000" stroke-width="1"/><rect x="511.5" y="368.5" width="4" height="8" fill="#fff" stroke="#000" stroke-width="1"/><rect x="519.5" y="363.5" width="4" height="6" fill="#fff" stroke="#000" stroke-width="1"/><rect x="543.5" y="360.5" width="4" height="34" fill="#fff" stroke="#000" stroke-width="1"/><rect x="551.5" y="344.5" width="4" height="16" fill="#fff" stroke="#000" stroke-width="1"/><rect x="567.5" y="347.5" width="4" height="5" fill="#fff" stroke="#000" stroke-width="1"/><rect x="575.5" y="331.5" width="4" height="16" fill="#fff" stroke="#000" stroke-width="1"/><rect x="583.5" y="327.5" width="4" height="4" fill="#fff" stroke="#000" stroke-width="1"/><rect x="591.5" y="302.5" width="4" height="25" fill="#fff" stroke="#000" stroke-width="1"/><rect x="599.5" y="283.5" width="4" height="21" fill="#fff" stroke="#000" stroke-width="1"/><rect x="615.5" y="275.5" width="4" height="2" fill="#fff" stroke="#000" stroke-width="1"/><rect x="631.5" y="274.5" width="4" height="9" fill="#fff" stroke="#000" stroke-width="1"/><rect x="695.5" y="447.5" width="4" height="2" fill="#fff" stroke="#000" stroke-width="1"/><rect x="703.5" y="444.5" width="4" height="3" fill="#fff" stroke="#000" stroke-width="1"/><rect x="711.5" y="435.5" width="4" height="11" fill="#fff" stroke="#000" stroke-width="1"/><rect x="735.5" y="466.5" width="4" height="27" fill="#fff" stroke="#000" stroke-width="1"/><rect x="743.5" y="450.5" width="4" height="16" fill="#fff" stroke="#000" stroke-width="1"/><rect x="767.5" y="557.5" width="4" height="6" fill="#fff" stroke="#000" stroke-width="1"/><rect x="783.5" y="560.5" width="4" height="7" fill="#fff" stroke="#000" stroke-width="1"/><rect x="807.5" y="546.5" width="4" height="55" fill="#fff" stroke="#000" stroke-width="1"/><rect x="815.5" y="523.5" width="4" height="23" fill="#fff" stroke="#000" stroke-width="1"/><rect x="823.5" y="501.5" width="4" height="22" fill="#fff" stroke="#000" stroke-width="1"/><rect x="847.5" y="517.5" width="4" height="13" fill="#fff" stroke="#000" stroke-width="1"/><rect x="855.5" y="500.5" width="4" height="24" fill="#fff" stroke="#000" stroke-width="1"/><rect x="863.5" y="496.5" width="4" height="4" fill="#fff" stroke="#000" stroke-width="1"/><rect x="871.5" y="467.5" width="4" height="29" fill="#fff" stroke="#000" stroke-width="1"/><rect x="903.5" y="559.5" width="4" height="12" fill="#fff" stroke="#000" stroke-width="1"/><rect x="935.5" y="559.5" width="4" height="17" fill="#fff" stroke="#000" stroke-width="1"/><rect x="951.5" y="484.5" width="4" height="81" fill="#fff" stroke="#000" stroke-width="1"/><rect x="967.5" y="488.5" width="4" height="5" fill="#fff" stroke="#000" stroke-width="1"/></g><rect x="8.5" y="109.5" width="1231" height="573" fill="none" stroke="#000" stroke-width="1" shape-rendering="crispEdges"/><path d="M986.5 110 L996.5 110 L991.5 115 Z" fill="#778899"/><text x="1245" y="122.5" font-family='"Liberation Sans", sans-serif' font-size="10" textLength="31" lengthAdjust="spacingAndGlyphs" fill="#000" stroke="#000" stroke-width="0.25">1.09890</text><text x="1245" y="155.5" font-family='"Liberation Sans", sans-serif' font-size="10" textLength="31" lengthAdjust="spacingAndGlyphs" fill="#000" stroke="#000" stroke-width="0.25">1.09590</text><text x="1245" y="188.5" font-family='"Liberation Sans", sans-serif' font-size="10" textLength="31" lengthAdjust="spacingAndGlyphs" fill="#000" stroke="#000" stroke-width="0.25">1.09290</text><text x="1245" y="221.5" font-family='"Liberation Sans", sans-serif' font-size="10" textLength="31" lengthAdjust="spacingAndGlyphs" fill="#000" stroke="#000" stroke-width="0.25">1.08990</text><text x="1245" y="254.5" font-family='"Liberation Sans", sans-serif' font-size="10" textLength="31" lengthAdjust="spacingAndGlyphs" fill="#000" stroke="#000" stroke-width="0.25">1.08690</text><text x="1245" y="287.5" font-family='"Liberation Sans", sans-serif' font-size="10" textLength="31" lengthAdjust="spacingAndGlyphs" fill="#000" stroke="#000" stroke-width="0.25">1.08390</text><text x="1245" y="320.5" font-family='"Liberation Sans", sans-serif' font-size="10" textLength="31" lengthAdjust="spacingAndGlyphs" fill="#000" stroke="#000" stroke-width="0.25">1.08085</text><text x="1245" y="353.5" font-family='"Liberation Sans", sans-serif' font-size="10" textLength="31" lengthAdjust="spacingAndGlyphs" fill="#000" stroke="#000" stroke-width="0.25">1.07785</text><text x="1245" y="386.5" font-family='"Liberation Sans", sans-serif' font-size="10" textLength="31" lengthAdjust="spacingAndGlyphs" fill="#000" stroke="#000" stroke-width="0.25">1.07485</text><text x="1245" y="419.5" font-family='"Liberation Sans", sans-serif' font-size="10" textLength="31" lengthAdjust="spacingAndGlyphs" fill="#000" stroke="#000" stroke-width="0.25">1.07185</text><text x="1245" y="452.5" font-family='"Liberation Sans", sans-serif' font-size="10" textLength="31" lengthAdjust="spacingAndGlyphs" fill="#000" stroke="#000" stroke-width="0.25">1.06885</text><text x="1245" y="485.5" font-family='"Liberation Sans", sans-serif' font-size="10" textLength="31" lengthAdjust="spacingAndGlyphs" fill="#000" stroke="#000" stroke-width="0.25">1.06585</text><text x="1245" y="518.5" font-family='"Liberation Sans", sans-serif' font-size="10" textLength="31" lengthAdjust="spacingAndGlyphs" fill="#000" stroke="#000" stroke-width="0.25">1.06285</text><text x="1245" y="551.5" font-family='"Liberation Sans", sans-serif' font-size="10" textLength="31" lengthAdjust="spacingAndGlyphs" fill="#000" stroke="#000" stroke-width="0.25">1.05985</text><text x="1245" y="584.5" font-family='"Liberation Sans", sans-serif' font-size="10" textLength="31" lengthAdjust="spacingAndGlyphs" fill="#000" stroke="#000" stroke-width="0.25">1.05680</text><text x="1245" y="617.5" font-family='"Liberation Sans", sans-serif' font-size="10" textLength="31" lengthAdjust="spacingAndGlyphs" fill="#000" stroke="#000" stroke-width="0.25">1.05380</text><text x="1245" y="650.5" font-family='"Liberation Sans", sans-serif' font-size="10" textLength="31" lengthAdjust="spacingAndGlyphs" fill="#000" stroke="#000" stroke-width="0.25">1.05080</text><text x="1245" y="683.5" font-family='"Liberation Sans", sans-serif' font-size="10" textLength="31" lengthAdjust="spacingAndGlyphs" fill="#000" stroke="#000" stroke-width="0.25">1.04780</text><path d="M1239 119.5H1243 M1239 152.5H1243 M1239 185.5H1243 M1239 218.5H1243 M1239 251.5H1243 M1239 284.5H1243 M1239 317.5H1243 M1239 350.5H1243 M1239 383.5H1243 M1239 416.5H1243 M1239 449.5H1243 M1239 482.5H1243 M1239 515.5H1243 M1239 548.5H1243 M1239 581.5H1243 M1239 614.5H1243 M1239 647.5H1243 M1239 680.5H1243" stroke="#000" stroke-width="1" shape-rendering="crispEdges"/><rect x="1242" y="482" width="39" height="11" fill="#000"/><text x="1245.5" y="491" font-family='"Liberation Sans", sans-serif' font-size="10" textLength="31.5" lengthAdjust="spacingAndGlyphs" fill="#fff">1.06528</text><rect x="1242" y="583" width="39" height="11" fill="#0000c8"/><text x="1245.5" y="592" font-family='"Liberation Sans", sans-serif' font-size="10" textLength="31.5" lengthAdjust="spacingAndGlyphs" fill="#fff">1.05614</text><text x="7.6" y="696" font-family='"Liberation Sans", sans-serif' font-size="10" textLength="51.5" lengthAdjust="spacingAndGlyphs" fill="#000" stroke="#000" stroke-width="0.2">20 Dec 2013</text><text x="71.6" y="696" font-family='"Liberation Sans", sans-serif' font-size="10" textLength="54.5" lengthAdjust="spacingAndGlyphs" fill="#000" stroke="#000" stroke-width="0.2">23 Dec 16:00</text><text x="135.6" y="696" font-family='"Liberation Sans", sans-serif' font-size="10" textLength="54.5" lengthAdjust="spacingAndGlyphs" fill="#000" stroke="#000" stroke-width="0.2">26 Dec 13:00</text><text x="199.6" y="696" font-family='"Liberation Sans", sans-serif' font-size="10" textLength="54.5" lengthAdjust="spacingAndGlyphs" fill="#000" stroke="#000" stroke-width="0.2">27 Dec 20:00</text><text x="263.6" y="696" font-family='"Liberation Sans", sans-serif' font-size="10" textLength="54.5" lengthAdjust="spacingAndGlyphs" fill="#000" stroke="#000" stroke-width="0.2">31 Dec 04:00</text><text x="327.6" y="696" font-family='"Liberation Sans", sans-serif' font-size="10" textLength="47.4" lengthAdjust="spacingAndGlyphs" fill="#000" stroke="#000" stroke-width="0.2">3 Jan 00:00</text><text x="391.6" y="696" font-family='"Liberation Sans", sans-serif' font-size="10" textLength="47.4" lengthAdjust="spacingAndGlyphs" fill="#000" stroke="#000" stroke-width="0.2">6 Jan 08:00</text><text x="455.6" y="696" font-family='"Liberation Sans", sans-serif' font-size="10" textLength="47.4" lengthAdjust="spacingAndGlyphs" fill="#000" stroke="#000" stroke-width="0.2">7 Jan 16:00</text><text x="519.6" y="696" font-family='"Liberation Sans", sans-serif' font-size="10" textLength="47.4" lengthAdjust="spacingAndGlyphs" fill="#000" stroke="#000" stroke-width="0.2">9 Jan 00:00</text><text x="583.6" y="696" font-family='"Liberation Sans", sans-serif' font-size="10" textLength="52.4" lengthAdjust="spacingAndGlyphs" fill="#000" stroke="#000" stroke-width="0.2">10 Jan 08:00</text><text x="647.6" y="696" font-family='"Liberation Sans", sans-serif' font-size="10" textLength="52.4" lengthAdjust="spacingAndGlyphs" fill="#000" stroke="#000" stroke-width="0.2">13 Jan 16:00</text><text x="711.6" y="696" font-family='"Liberation Sans", sans-serif' font-size="10" textLength="52.4" lengthAdjust="spacingAndGlyphs" fill="#000" stroke="#000" stroke-width="0.2">15 Jan 00:00</text><text x="775.6" y="696" font-family='"Liberation Sans", sans-serif' font-size="10" textLength="52.4" lengthAdjust="spacingAndGlyphs" fill="#000" stroke="#000" stroke-width="0.2">16 Jan 08:00</text><text x="839.6" y="696" font-family='"Liberation Sans", sans-serif' font-size="10" textLength="52.4" lengthAdjust="spacingAndGlyphs" fill="#000" stroke="#000" stroke-width="0.2">17 Jan 16:00</text><text x="903.6" y="696" font-family='"Liberation Sans", sans-serif' font-size="10" textLength="52.4" lengthAdjust="spacingAndGlyphs" fill="#000" stroke="#000" stroke-width="0.2">21 Jan 00:00</text><text x="967.6" y="696" font-family='"Liberation Sans", sans-serif' font-size="10" textLength="52.4" lengthAdjust="spacingAndGlyphs" fill="#000" stroke="#000" stroke-width="0.2">22 Jan 08:00</text><path d="M9.5 683V687 M73.5 683V687 M137.5 683V687 M201.5 683V687 M265.5 683V687 M329.5 683V687 M393.5 683V687 M457.5 683V687 M521.5 683V687 M585.5 683V687 M649.5 683V687 M713.5 683V687 M777.5 683V687 M841.5 683V687 M905.5 683V687 M969.5 683V687" stroke="#000" stroke-width="1" shape-rendering="crispEdges"/><path d="M12 116H19L15.5 120Z" fill="#000"/></svg>
<svg class="a" style="left:0;top:0" width="1288" height="748" shape-rendering="crispEdges"><rect x="4" y="704" width="1280" height="18" fill="#dcdcdc"/><rect x="4" y="704" width="2" height="18" fill="#7c7c70"/><rect x="4" y="722" width="1280" height="1" fill="#fff"/><rect x="4" y="723" width="1280" height="21" fill="#e0e0e0"/><text x="19.2" y="716.5" font-family='"Liberation Sans", sans-serif' font-size="11" textLength="64.1" lengthAdjust="spacingAndGlyphs" fill="#6e6e62">EURUSD,M15</text><text x="106.3" y="716.5" font-family='"Liberation Sans", sans-serif' font-size="11" textLength="56.9" lengthAdjust="spacingAndGlyphs" fill="#6e6e62">USDCHF,H4</text><text x="185" y="716.5" font-family='"Liberation Sans", sans-serif' font-size="11" textLength="63" lengthAdjust="spacingAndGlyphs" fill="#6e6e62">GBPUSD,M15</text><text x="270.3" y="716.5" font-family='"Liberation Sans", sans-serif' font-size="11" textLength="53.1" lengthAdjust="spacingAndGlyphs" fill="#6e6e62">USDJPY,H1</text><text x="346.4" y="716.5" font-family='"Liberation Sans", sans-serif' font-size="11" textLength="65.3" lengthAdjust="spacingAndGlyphs" fill="#6e6e62">EURGBP,Daily</text><text x="514.7" y="716.5" font-family='"Liberation Sans", sans-serif' font-size="11" textLength="52.0" lengthAdjust="spacingAndGlyphs" fill="#6e6e62">GBPJPY,H4</text><text x="590.3" y="716.5" font-family='"Liberation Sans", sans-serif' font-size="11" textLength="56.6" lengthAdjust="spacingAndGlyphs" fill="#6e6e62">EURCHF,H4</text><text x="670.2" y="716.5" font-family='"Liberation Sans", sans-serif' font-size="11" textLength="56.9" lengthAdjust="spacingAndGlyphs" fill="#6e6e62">USDCHF,H4</text><text x="750.7" y="716.5" font-family='"Liberation Sans", sans-serif' font-size="11" textLength="52.5" lengthAdjust="spacingAndGlyphs" fill="#6e6e62">USDJPY,H1</text><text x="826.5" y="716.5" font-family='"Liberation Sans", sans-serif' font-size="11" textLength="57.5" lengthAdjust="spacingAndGlyphs" fill="#6e6e62">USDCAD,H4</text><text x="906.5" y="716.5" font-family='"Liberation Sans", sans-serif' font-size="11" textLength="57.5" lengthAdjust="spacingAndGlyphs" fill="#6e6e62">AUDUSD,H4</text><text x="985.5" y="716.5" font-family='"Liberation Sans", sans-serif' font-size="11" textLength="62.4" lengthAdjust="spacingAndGlyphs" fill="#6e6e62">GBPCHF,M15</text><text x="1070.3" y="716.5" font-family='"Liberation Sans", sans-serif' font-size="11" textLength="53.9" lengthAdjust="spacingAndGlyphs" fill="#6e6e62">EURJPY,H4</text><text x="1146.4" y="716.5" font-family='"Liberation Sans", sans-serif' font-size="11" textLength="56.8" lengthAdjust="spacingAndGlyphs" fill="#6e6e62">XAUUSD,H4</text><text x="1226" y="716.5" font-family='"Liberation Sans", sans-serif' font-size="11" textLength="21.7" lengthAdjust="spacingAndGlyphs" fill="#6e6e62">NZDI</text><path d="M97.5 706V719 M177.5 706V719 M261.5 706V719 M337.5 706V719 M581.5 706V719 M660.5 706V719 M740.5 706V719 M817.5 706V719 M896.5 706V719 M977.5 706V719 M1061.5 706V719 M1136.5 706V719 M1216.5 706V719" stroke="#7a7a6c" stroke-width="1"/><path d="M424.5 703V721.5H504.5V703" fill="#fff" stroke="#000" stroke-width="1"/><rect x="425" y="704" width="79" height="17" fill="#fff"/><text x="434.8" y="716.5" font-family='"Liberation Sans", sans-serif' font-size="11" textLength="57.4" lengthAdjust="spacingAndGlyphs" fill="#000">AUDNZD,H4</text><path d="M1259 708v8l-4-4z" fill="#a8a8a8"/><path d="M1273 708v8l4-4z" fill="#000"/><text x="5.6" y="738.5" font-family='"Liberation Sans", sans-serif' font-size="11" textLength="128.9" lengthAdjust="spacingAndGlyphs" fill="#000">Для справки, нажмите F1</text><text x="568.7" y="738.5" font-family='"Liberation Sans", sans-serif' font-size="11" textLength="34.6" lengthAdjust="spacingAndGlyphs" fill="#000">Default</text><text x="1179" y="738.5" font-family='"Liberation Sans", sans-serif' font-size="11" textLength="40.7" lengthAdjust="spacingAndGlyphs" fill="#000">127/0 kb</text><path d="M563.5 726V743 M673.5 726V743 M774.5 726V743 M846.5 726V743 M917.5 726V743 M986.5 726V743 M1057.5 726V743 M1122.5 726V743" stroke="#a0a0a0" stroke-width="1"/><path d="M564.5 726V743 M674.5 726V743 M775.5 726V743 M847.5 726V743 M918.5 726V743 M987.5 726V743 M1058.5 726V743 M1123.5 726V743" stroke="#fff" stroke-width="1"/><rect x="1128" y="729" width="2" height="6" fill="#4a8a10"/><rect x="1128" y="737.0" width="2" height="4.0" fill="#c02818"/><rect x="1131" y="729" width="2" height="6" fill="#4a8a10"/><rect x="1131" y="736.4" width="2" height="4.6" fill="#c02818"/><rect x="1134" y="729" width="2" height="6" fill="#4a8a10"/><rect x="1134" y="735.8" width="2" height="5.2" fill="#c02818"/><rect x="1137" y="729" width="2" height="6" fill="#4a8a10"/><rect x="1137" y="735.2" width="2" height="5.8" fill="#c02818"/><rect x="1140" y="729" width="2" height="6" fill="#4a8a10"/><rect x="1140" y="734.6" width="2" height="6.4" fill="#c02818"/><rect x="1143" y="729" width="2" height="6" fill="#4a8a10"/><rect x="1143" y="734.0" width="2" height="7.0" fill="#c02818"/><rect x="1146" y="729" width="2" height="6" fill="#4a8a10"/><rect x="1146" y="734.0" width="2" height="7.0" fill="#c02818"/><rect x="1149" y="729" width="2" height="6" fill="#4a8a10"/><rect x="1149" y="734.0" width="2" height="7.0" fill="#c02818"/><path d="M1283 731L1268 744M1283 735L1272 744M1283 739L1276 744" stroke="#a0a0a0" stroke-width="1.2"/></svg>
<!-- taskbar strip -->
<div class="a" style="left:4px;top:744px;width:1280px;height:4px;background:#787878"></div>
<div class="a" style="left:4px;top:744px;width:40px;height:4px;background:#f08a28"></div>
</body></html>
